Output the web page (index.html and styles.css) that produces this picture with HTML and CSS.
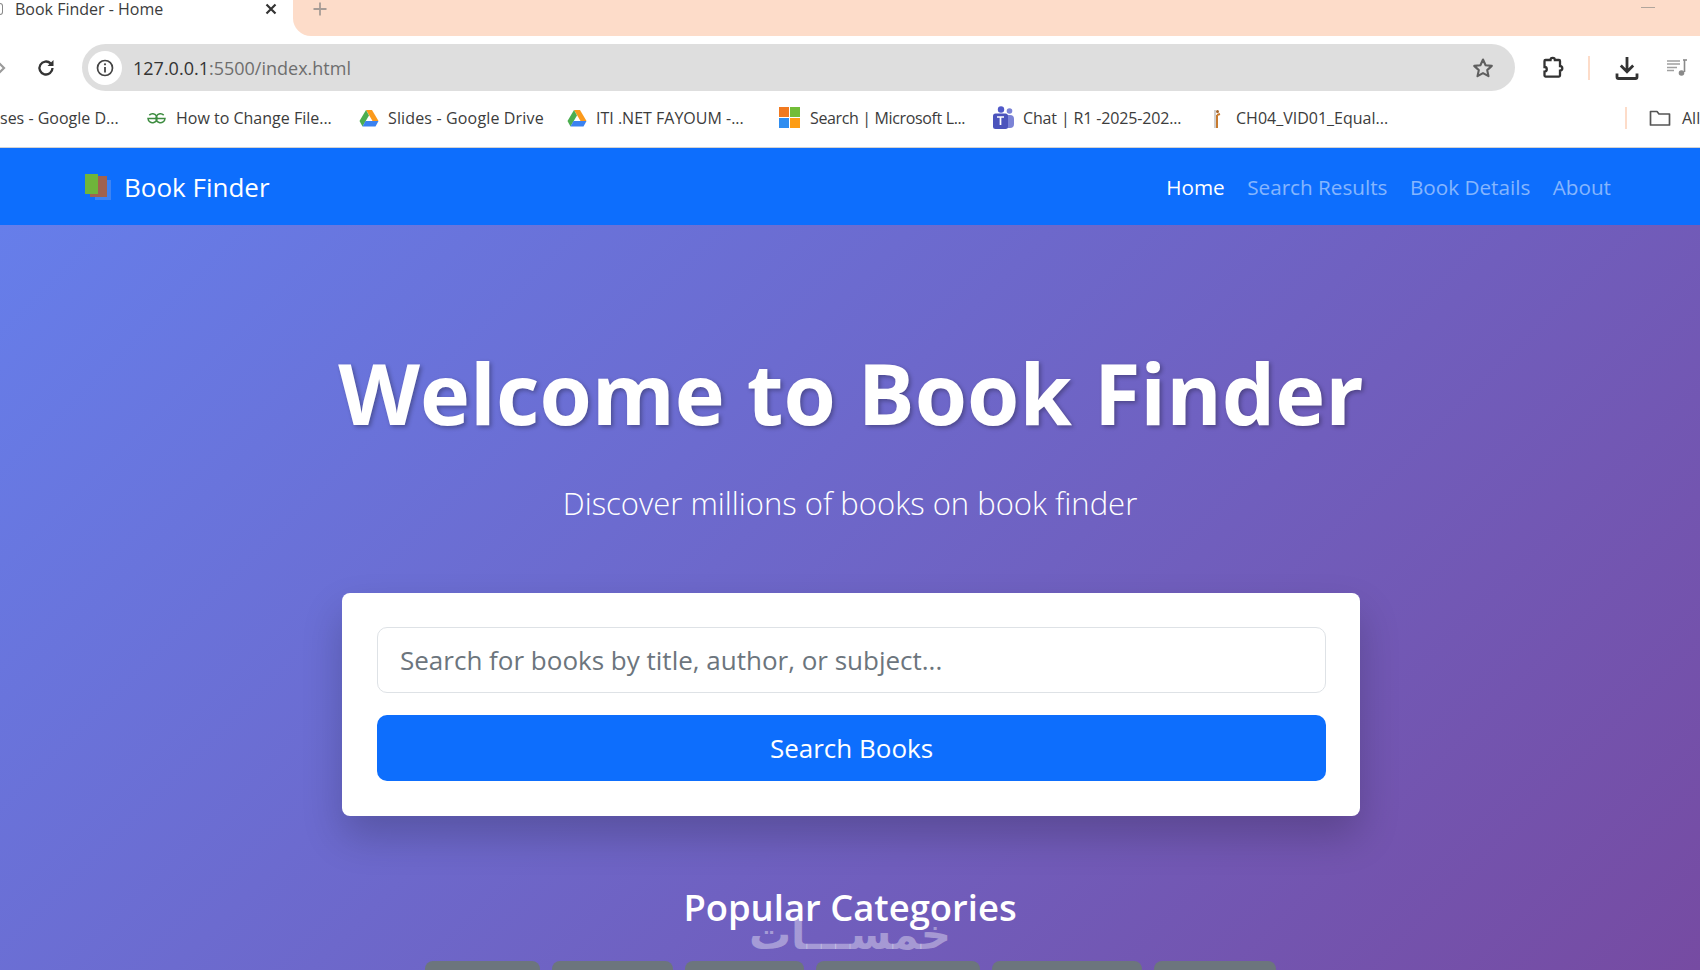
FILE: index.html
```html
<!DOCTYPE html>
<html lang="en">
<head>
<meta charset="utf-8">
<title>Book Finder - Home</title>
<link rel="stylesheet" href="styles.css">
</head>
<body>
<div class="chrome">
  <div class="tabstrip">
    <div class="tab">
      <span class="tab-favicon"></span>
      <span class="tab-title">Book Finder - Home</span>
      <svg class="tab-close" width="14" height="14" viewBox="0 0 14 14"><path d="M2.500 2.500l9 9M11.500 2.500l-9 9" stroke="#333" stroke-width="2.200" fill="none"/></svg>
    </div>
    <div class="tab-rest">
      <svg class="new-tab" width="16" height="16" viewBox="0 0 16 16"><path d="M8 1.500v13M1.500 8h13" stroke="#a79c96" stroke-width="1.800" fill="none"/></svg>
      <span class="minimize"></span>
    </div>
  </div>
  <div class="toolbar">
    <svg class="forward" width="6" height="14" viewBox="0 0 6 14"><path d="M-2 1l6 6-6 6" stroke="#9a9a9a" stroke-width="2.200" fill="none"/></svg>
    <svg class="reload" width="22" height="22" viewBox="0 0 22 22"><path d="M17.500 11a6.500 6.500 0 1 1-1.900-4.600" stroke="#333" stroke-width="2.300" fill="none"/><path d="M18.500 3v6h-6z" fill="#333"/></svg>
    <div class="omnibox">
      <span class="site-info"><svg width="20" height="20" viewBox="0 0 20 20"><circle cx="10" cy="10" r="7.500" stroke="#444" stroke-width="1.700" fill="none"/><path d="M10 9v5.500" stroke="#444" stroke-width="1.800"/><circle cx="10" cy="6.300" r="1.100" fill="#444"/></svg></span>
      <span class="url"><span class="host">127.0.0.1</span>:5500/index.html</span>
      <svg class="star" width="24" height="24" viewBox="0 0 24 24"><path d="M12 3.500l2.600 5.700 6.200.7-4.600 4.200 1.300 6.100-5.500-3.100-5.500 3.100 1.300-6.100-4.600-4.200 6.200-.7z" stroke="#5f5f5f" stroke-width="2.100" fill="none" stroke-linejoin="round"/></svg>
    </div>
    <div class="tools">
      <svg width="26" height="26" viewBox="0 0 26 26"><path d="M9 5h2.500a2.200 2.200 0 0 1 4.400 0H20a1 1 0 0 1 1 1v5a2.300 2.300 0 0 1 0 4.600v5a1 1 0 0 1-1 1H6.500a1 1 0 0 1-1-1v-4a2.300 2.300 0 0 0 0-4.600V6a1 1 0 0 1 1-1z" stroke="#333" stroke-width="2.300" fill="none"/></svg>
      <span class="tool-sep"></span>
      <svg width="26" height="26" viewBox="0 0 26 26"><path d="M13 2v14M6.800 10.500l6.200 6.200 6.200-6.200" stroke="#333" stroke-width="2.800" fill="none"/><path d="M3 18.500v3.500a1.500 1.500 0 0 0 1.500 1.500h17a1.500 1.500 0 0 0 1.500-1.500v-3.500" stroke="#333" stroke-width="2.800" fill="none"/></svg>
      <svg class="media" width="22" height="22" viewBox="0 0 22 22"><path d="M1 4h13M1 7h13M1 10.500h10M1 13.500h7" stroke="#a0a0a0" stroke-width="1.400" fill="none"/><path d="M18.500 3v12" stroke="#8a8a8a" stroke-width="1.600"/><path d="M17 3h4" stroke="#8a8a8a" stroke-width="1.600"/><circle cx="15.500" cy="16" r="2.800" fill="#8a8a8a"/></svg>
    </div>
  </div>
  <div class="bookmarks">
    <span class="bm bm-first">ses - Google D...</span>
    <span class="bm"><svg width="21" height="12" viewBox="0 0 21 12"><path d="M10.500 6.500h8.500a4.500 4.500 0 1 1-1.300-3.400M10.500 6.500H2a4.500 4.500 0 1 0 1.300-3.400" stroke="#3d8c40" stroke-width="1.500" fill="none"/></svg>How to Change File...</span>
    <span class="bm"><svg width="20" height="18" viewBox="0 0 20 18"><path d="M7 1h6l6.500 11h-6z" fill="#fb9a1c"/><path d="M7 1l3 5.500-6.500 11L.5 12z" fill="#4cae50"/><path d="M3.500 17.500l3-5.500h13l-3 5.500z" fill="#3b82f0"/></svg>Slides - Google Drive</span>
    <span class="bm"><svg width="20" height="18" viewBox="0 0 20 18"><path d="M7 1h6l6.500 11h-6z" fill="#fb9a1c"/><path d="M7 1l3 5.500-6.500 11L.5 12z" fill="#4cae50"/><path d="M3.500 17.500l3-5.500h13l-3 5.500z" fill="#3b82f0"/></svg>ITI .NET FAYOUM -...</span>
    <span class="bm"><svg width="22" height="22" viewBox="0 0 22 22"><rect x="0" y="0" width="10" height="10" fill="#f1791f"/><rect x="11" y="0" width="10" height="10" fill="#72bd38"/><rect x="0" y="11" width="10" height="10" fill="#2f8df0"/><rect x="11" y="11" width="10" height="10" fill="#fd9c14"/></svg>Search | Microsoft L...</span>
    <span class="bm"><svg width="22" height="24" viewBox="0 0 22 24"><circle cx="17.500" cy="5" r="2.800" fill="#7b83d6"/><rect x="12" y="9" width="10" height="13" rx="4" fill="#7b83d6"/><circle cx="9" cy="3.500" r="3.200" fill="#5059c9"/><rect x="1" y="7.500" width="15" height="15.500" rx="2.500" fill="#4b53bc"/><path d="M5 11h7M8.500 11v8" stroke="#fff" stroke-width="1.700"/></svg>Chat | R1 -2025-202...</span>
    <span class="bm"><svg width="12" height="24" viewBox="0 0 12 24"><path d="M4 4v18" stroke="#d0d0d0" stroke-width="2"/><path d="M6 9l3-1M6 9v13" stroke="#c77a2e" stroke-width="2" fill="none"/><circle cx="6.500" cy="5.500" r="1.500" fill="#a3642a"/></svg>CH04_VID01_Equal...</span>
    <span class="bm-sep"></span>
    <span class="bm bm-all"><svg width="22" height="20" viewBox="0 0 22 20"><path d="M1.500 3.500h6.500l2 2.500h10.500v11h-19z" stroke="#555" stroke-width="1.700" fill="none" stroke-linejoin="round"/></svg>All</span>
  </div>
</div>
<nav class="navbar">
  <a class="brand"><svg width="30" height="26" viewBox="0 0 30 26"><rect x="11" y="6" width="16" height="20" fill="#4d8bf0" opacity=".75"/><rect x="6" y="2" width="17" height="21" fill="#a0624f"/><rect x="1" y="0" width="13" height="20" fill="#6fb53a"/></svg>Book Finder</a>
  <div class="nav-links">
    <a class="nav-link active">Home</a>
    <a class="nav-link">Search Results</a>
    <a class="nav-link">Book Details</a>
    <a class="nav-link">About</a>
  </div>
</nav>
<main class="hero">
  <h1 class="hero-title">Welcome to Book Finder</h1>
  <p class="hero-sub">Discover millions of books on book finder</p>
  <div class="search-card">
    <input class="search-input" type="text" placeholder="Search for books by title, author, or subject...">
    <button class="search-btn">Search Books</button>
  </div>
  <h2 class="cat-title">Popular Categories</h2>
  <div class="chips">
    <span class="chip chip-a"></span>
    <span class="chip chip-b"></span>
    <span class="chip chip-c"></span>
    <span class="chip chip-d"></span>
    <span class="chip chip-e"></span>
    <span class="chip chip-f"></span>
  </div>
  <span class="watermark" dir="rtl" lang="ar">خمســـات</span>
</main>
</body>
</html>
```

FILE: styles.css
```css
* { box-sizing: border-box; }
html, body { margin: 0; height: 970px; overflow: hidden; }
body { font-family: "Open Sans", "Noto Sans", sans-serif; background: #fff; width: 1700px; }

.chrome { background: #fff; color: #3c3c3c; height: 148px; border-bottom: 1px solid #d3d3d3; }

.tabstrip { display: flex; height: 36px; }
.tab { width: 293px; display: flex; align-items: center; padding: 0 7px 18px 0; font-size: 16px; height: 36px; }
.tab-favicon { width: 3px; height: 12px; margin-right: 12px; border: 1.500px solid #888; border-left: 0; border-radius: 0 6px 6px 0; flex: none; }
.tab-title { flex: 1; white-space: nowrap; }
.tab-close { margin-right: 8px; }
.tab-rest { flex: 1; background: #fddcc9; border-bottom-left-radius: 18px; display: flex; justify-content: space-between; padding: 0 45px 0 19px; }
.new-tab { margin-top: 1px; }
.minimize { width: 14px; height: 1px; background: #b0a59c; margin-top: 7px; }

.toolbar { display: flex; align-items: center; height: 55px; padding: 8px 0 0 0; }
.forward { flex: none; margin-right: 29px; }
.reload { flex: none; margin-right: 25px; }
.omnibox { width: 1433px; flex: none; height: 47px; border-radius: 24px; background: #dedede; display: flex; align-items: center; padding: 0 20px 0 6px; font-size: 18px; }
.site-info { width: 34px; height: 34px; border-radius: 50%; background: #fff; display: flex; align-items: center; justify-content: center; flex: none; }
.url { flex: 1; margin-left: 11px; color: #6e6e6e; white-space: nowrap; }
.host { color: #333; }
.tools { flex: 1; display: flex; align-items: center; padding-left: 24px; }
.tool-sep { width: 2px; height: 24px; background: #fddcc9; margin: 0 24px 0 23px; }
.media { margin-left: 26px; }

.bookmarks { display: flex; align-items: center; height: 56px; font-size: 16px; white-space: nowrap; padding-bottom: 3px; overflow: hidden; }
.bm { display: inline-flex; align-items: center; gap: 9px; }
.bm-first { width: 146px; flex: none; }
.bm:nth-child(2) { width: 213px; flex: none; }
.bm:nth-child(3) { width: 208px; flex: none; letter-spacing: .15px; }
.bm:nth-child(4) { width: 212px; flex: none; }
.bm:nth-child(5) { width: 213px; flex: none; letter-spacing: -.36px; }
.bm:nth-child(6) { width: 219px; flex: none; letter-spacing: -.15px; }
.bm:nth-child(7) { width: 414px; flex: none; gap: 13px; }
.bm-sep { width: 2px; height: 22px; background: #fddcc9; flex: none; margin-right: 22px; }
.bm-all { gap: 11px; }

.navbar { background: #0d6efd; height: 77px; display: flex; align-items: center; justify-content: space-between; padding: 0 89px 0 84px; }
.brand { display: flex; align-items: center; gap: 10px; color: #fff; font-size: 26px; }
.nav-links { display: flex; gap: 22.500px; }
.nav-link { color: rgba(255,255,255,.5); font-size: 20.700px; }
.nav-link.active { color: #fff; }

.hero { position: relative; height: 745px; overflow: hidden; background: linear-gradient(135deg, #667eea 0%, #764ba2 100%); color: #fff; display: flex; flex-direction: column; align-items: center; padding-top: 120px; }
.hero-title { margin: 0 0 0 2px; font-size: 84.600px; line-height: 96px; font-weight: 700; text-shadow: 2px 2px 4px rgba(0,0,0,.3); white-space: nowrap; }
.hero-sub { margin: 40px 0 0; font-size: 31px; line-height: 44px; font-weight: 300; }
.search-card { width: 1018px; margin: 68px 0 0 2px; padding: 34px 34px 0 35px; height: 223px; border-radius: 8px; background: #fff; box-shadow: 0 20px 40px rgba(0,0,0,.2); display: flex; flex-direction: column; gap: 22px; flex: none; }
.search-input { height: 66px; flex: none; border: 1px solid #dee2e6; border-radius: 10px; padding: 0 22px; font: inherit; font-size: 26px; color: #212529; }
.search-input::placeholder { color: #6c757d; opacity: 1; }
.search-btn { height: 66px; flex: none; background: #0d6efd; color: #fff; border: 0; border-radius: 10px; font: inherit; font-size: 26px; }
.cat-title { margin: 70px 0 0; font-size: 36.400px; line-height: 42px; font-weight: 600; white-space: nowrap; }
.chips { display: flex; gap: 12px; margin-top: 33px; flex: none; }
.chip { height: 48px; background: #6c757d; border-radius: 8px; flex: none; }
.chip-a { width: 115px; }
.chip-b { width: 121px; }
.chip-c { width: 119px; }
.chip-d { width: 164px; }
.chip-e { width: 150px; }
.chip-f { width: 122px; }
.watermark { position: absolute; left: 748px; top: 680px; width: 204px; font-family: "DejaVu Sans", sans-serif; font-weight: 700; font-size: 42px; line-height: 60px; color: rgba(255,255,255,.38); white-space: nowrap; display: flex; justify-content: center; }
```
